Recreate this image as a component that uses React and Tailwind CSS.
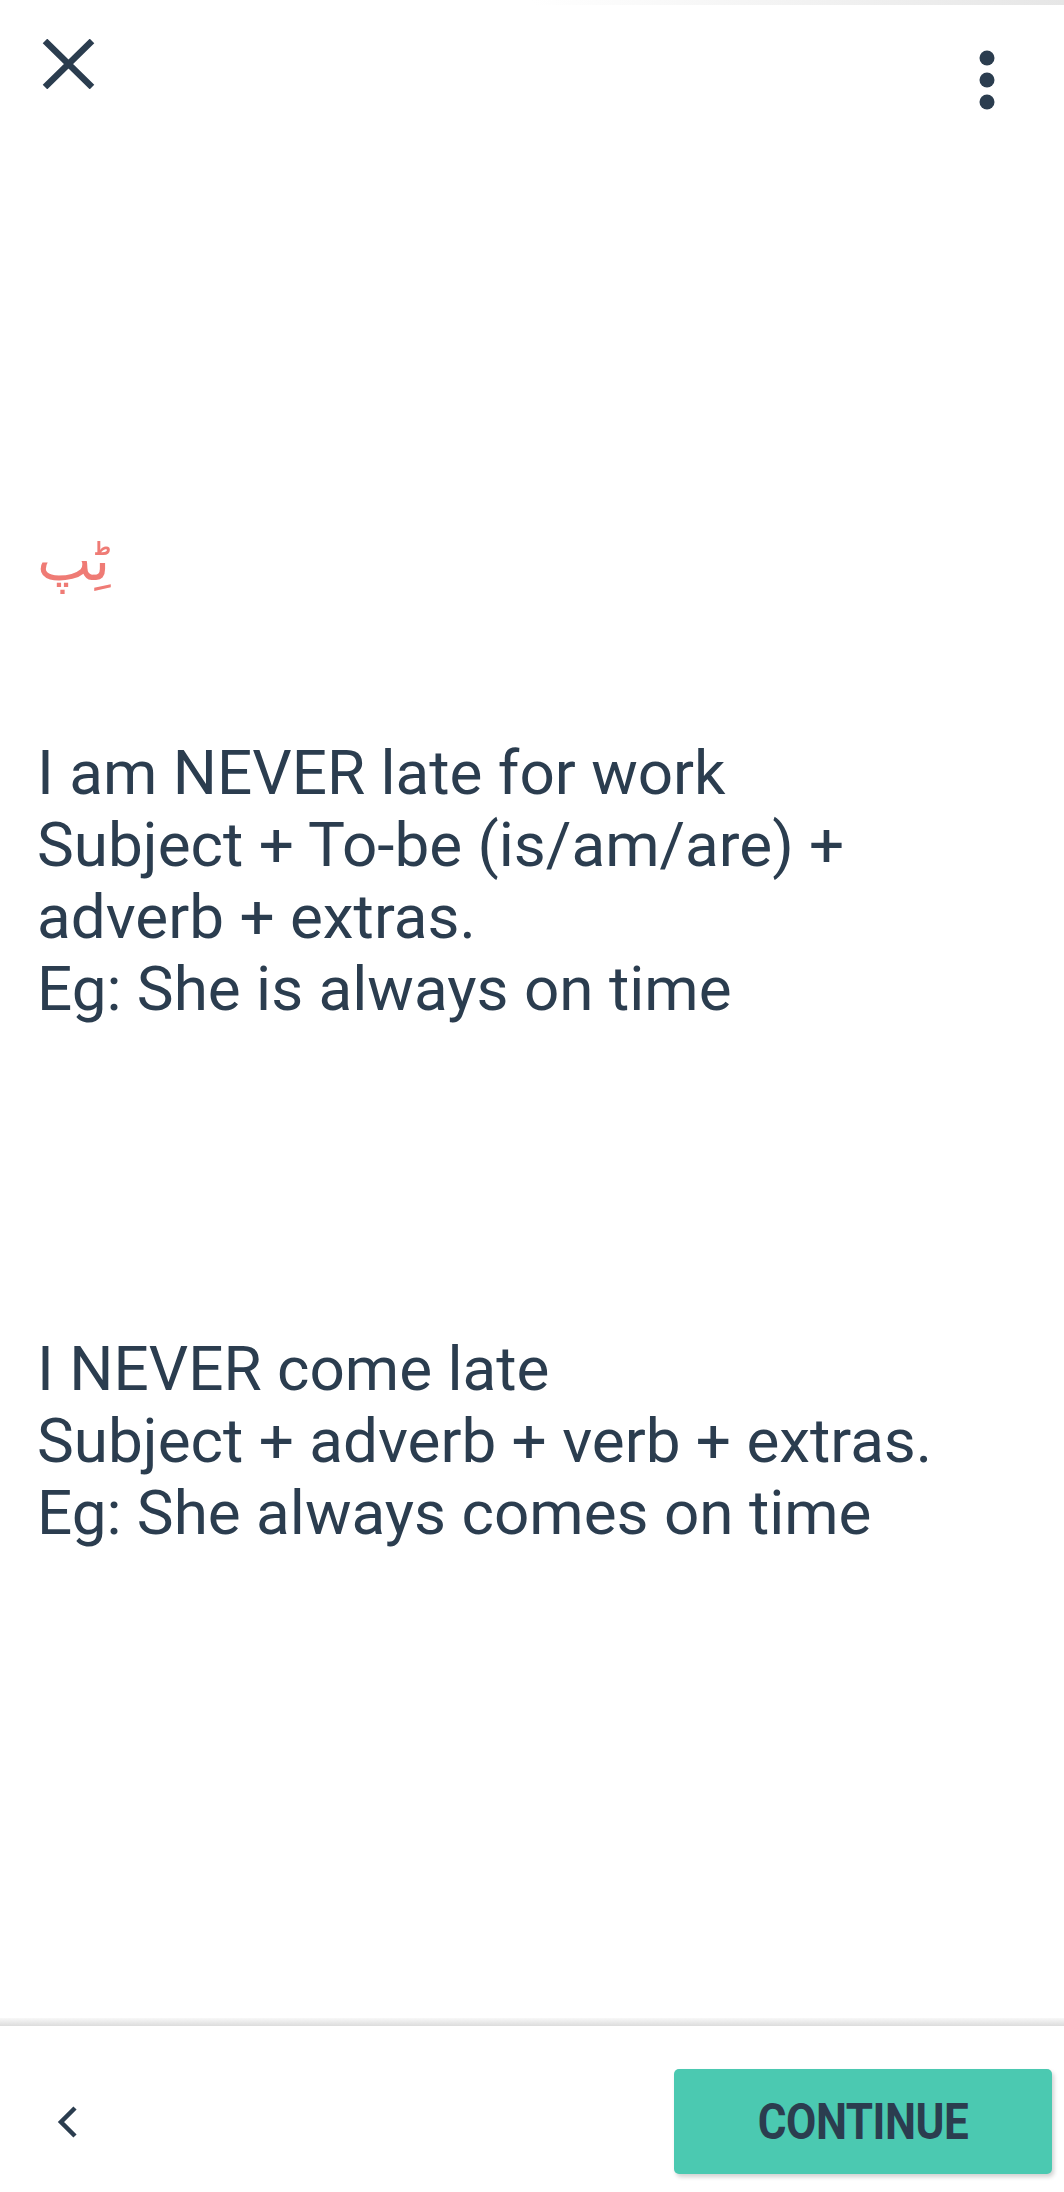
export default function App() {
  const ink = 'text-[#2b3d4f]'

  return (
    <div className="w-[1064px] h-[2192px] bg-white flex flex-col font-['Roboto',sans-serif]">
      {/* top edge shade left over from the status bar */}
      <div className="h-[5px] bg-gradient-to-r from-white via-white to-[#e6e6e6]" />

      {/* Header */}
      <div className="h-[125px] flex items-start justify-between pl-[42px] pr-[69px]">
        <button className="mt-[34px]">
          <svg width="53" height="50" viewBox="0 0 53 50">
            <path d="M3 2 L50 48 M50 2 L3 48" stroke="#2b3d4f" strokeWidth="6.5" strokeLinecap="butt" />
          </svg>
        </button>
        <button className="mt-[45px]">
          <svg width="16" height="60" viewBox="0 0 16 60">
            <circle cx="8" cy="8" r="7.5" fill="#2b3d4f" />
            <circle cx="8" cy="30" r="7.5" fill="#2b3d4f" />
            <circle cx="8" cy="52" r="7.5" fill="#2b3d4f" />
          </svg>
        </button>
      </div>

      {/* Lesson content */}
      <div className="px-[37px]">
        <div className="mt-[385px] h-[90px] text-[58px] leading-[90px] text-[#ef7b75] font-['DejaVu_Sans',sans-serif]" dir="rtl" style={{ textAlign: 'left' }}>
          ٹِپ
        </div>

        <div className={`mt-[132px] text-[62px] leading-[72px] ${ink}`}>
          <p>I am NEVER late for work</p>
          <p>Subject + To-be (is/am/are) +</p>
          <p>adverb + extras.</p>
          <p>Eg: She is always on time</p>
        </div>

        <div className={`mt-[308px] text-[62px] leading-[72px] ${ink}`}>
          <p>I NEVER come late</p>
          <p>Subject + adverb + verb + extras.</p>
          <p>Eg: She always comes on time</p>
        </div>
      </div>

      <div className="flex-1" />

      {/* Footer */}
      <div className="h-[8px] bg-gradient-to-b from-[#f8f8f8] to-[#dcdcdc]" />
      <div className="flex items-center justify-between pl-[56px] pr-[12px] pt-[43px] pb-[18px]">
        <button>
          <svg width="22" height="32" viewBox="0 0 22 32">
            <path d="M19 2 L5 16 L19 30" fill="none" stroke="#2b3d4f" strokeWidth="4.5" />
          </svg>
        </button>
        <button className="w-[378px] h-[105px] rounded-[5px] bg-[#4bc9b1] shadow-[2px_3px_4px_rgba(0,0,0,0.18)] flex items-center justify-center">
          <span className={`text-[44px] font-bold tracking-[-0.5px] ${ink} scale-y-[1.15]`}>CONTINUE</span>
        </button>
      </div>
    </div>
  )
}
